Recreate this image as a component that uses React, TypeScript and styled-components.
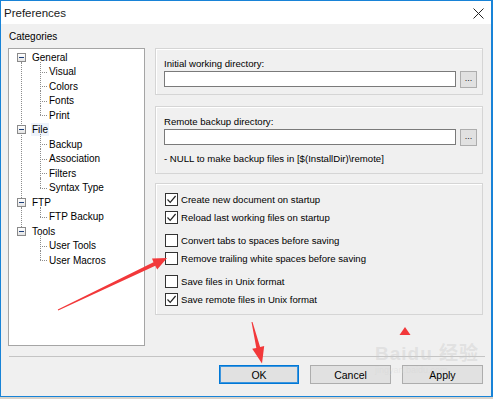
import React from 'react'
import styled, { createGlobalStyle } from 'styled-components'

const GlobalStyle = createGlobalStyle`
  html, body {
    margin: 0;
    padding: 0;
    background: #d8d3cb;
  }
  body {
    font-family: "Liberation Sans", Arial, sans-serif;
    font-size: 9.6px;
    color: #000;
  }
`

type TreeGroup = { label: string; children: string[] }

const tree: TreeGroup[] = [
  { label: 'General', children: ['Visual', 'Colors', 'Fonts', 'Print'] },
  { label: 'File', children: ['Backup', 'Association', 'Filters', 'Syntax Type'] },
  { label: 'FTP', children: ['FTP Backup'] },
  { label: 'Tools', children: ['User Tools', 'User Macros'] },
]

const options = [
  [
    { label: 'Create new document on startup', checked: true },
    { label: 'Reload last working files on startup', checked: true },
  ],
  [
    { label: 'Convert tabs to spaces before saving', checked: false },
    { label: 'Remove trailing white spaces before saving', checked: false },
  ],
  [
    { label: 'Save files in Unix format', checked: false },
    { label: 'Save remote files in Unix format', checked: true },
  ],
]

export default function App() {
  return (
    <>
      <GlobalStyle />
      <Window>
        <TitleBar>
          <Title>Preferences</Title>
          <CloseButton>
            <svg width="11" height="11" viewBox="0 0 11 11">
              <path d="M0.5 0.5 L10.5 10.5 M10.5 0.5 L0.5 10.5" stroke="#222" strokeWidth="1" />
            </svg>
          </CloseButton>
        </TitleBar>

        <Body>
          <Columns>
            <LeftColumn>
              <SectionLabel>Categories</SectionLabel>
              <TreeBox>
                {tree.map((group, gi) => (
                  <RootNode key={group.label} $last={gi === tree.length - 1}>
                    <RootRow>
                      <Expander />
                      <NodeLabel $selected={group.label === 'File'}>{group.label}</NodeLabel>
                    </RootRow>
                    <ChildList>
                      {group.children.map((child, ci) => (
                        <ChildRow key={child} $last={ci === group.children.length - 1}>
                          <NodeLabel>{child}</NodeLabel>
                        </ChildRow>
                      ))}
                    </ChildList>
                  </RootNode>
                ))}
              </TreeBox>
            </LeftColumn>

            <RightColumn>
              <GroupBox $height={47}>
                <FieldLabel>Initial working directory:</FieldLabel>
                <InputRow>
                  <TextInput />
                  <BrowseButton>...</BrowseButton>
                </InputRow>
              </GroupBox>

              <GroupBox $height={68}>
                <FieldLabel>Remote backup directory:</FieldLabel>
                <InputRow>
                  <TextInput />
                  <BrowseButton>...</BrowseButton>
                </InputRow>
                <Note>- NULL to make backup files in [$(InstallDir)\remote]</Note>
              </GroupBox>

              <CheckGroupBox>
                {options.map((set, si) => (
                  <CheckSet key={si}>
                    {set.map((opt) => (
                      <CheckRow key={opt.label}>
                        <CheckBox>
                          {opt.checked && (
                            <svg width="11" height="11" viewBox="0 0 11 11">
                              <path d="M1.5 5.5 L4.2 8.3 L9.6 2" fill="none" stroke="#222" strokeWidth="1.2" />
                            </svg>
                          )}
                        </CheckBox>
                        <span>{opt.label}</span>
                      </CheckRow>
                    ))}
                  </CheckSet>
                ))}
              </CheckGroupBox>
            </RightColumn>
          </Columns>

          <Separator />

          <ButtonRow>
            <DialogButton $default>OK</DialogButton>
            <DialogButton>Cancel</DialogButton>
            <DialogButton>Apply</DialogButton>
          </ButtonRow>
        </Body>

        <Watermark>
          <WatermarkLogo>Bai<span>du</span> 经验</WatermarkLogo>
          <WatermarkUrl>jingyan.baidu.com</WatermarkUrl>
        </Watermark>

        <Annotations width="493" height="399" viewBox="0 0 493 399">
          <polygon
            points="57.8,309.5 153.5,262.2 152,258.6 167,258 157.2,269.4 155.3,265.8 58.2,310.5"
            fill="#f2383a"
          />
          <polygon
            points="251.5,322.1 256.3,347.9 252.2,348.8 262,363.5 264.2,346 260.1,346.9 252.5,321.9"
            fill="#f2383a"
          />
          <polygon points="405,327 410.5,335 399.5,335" fill="#f2383a" />
        </Annotations>
      </Window>
    </>
  )
}

const Window = styled.div`
  position: relative;
  width: 493px;
  height: 397px;
  box-sizing: border-box;
  border: 1px solid #1883d7;
  border-right-width: 2px;
  background: #f0f0f0;
  display: flex;
  flex-direction: column;
  overflow: hidden;
`

const TitleBar = styled.div`
  height: 23px;
  background: #fff;
  display: flex;
  align-items: center;
  justify-content: space-between;
  padding: 0 7px 0 3px;
`

const Title = styled.div`
  font-size: 11.5px;
  color: #1a1a1a;
`

const CloseButton = styled.div`
  display: flex;
  align-items: center;
  margin-top: 1px;
`

const Body = styled.div`
  flex: 1;
  display: flex;
  flex-direction: column;
  padding: 6px 8px 0 7px;
`

const Columns = styled.div`
  display: grid;
  grid-template-columns: 137px 328px;
  column-gap: 10px;
`

const LeftColumn = styled.div`
  display: flex;
  flex-direction: column;
`

const SectionLabel = styled.div`
  height: 13px;
  line-height: 13px;
  margin: 0 0 5px 1px;
  font-size: 10px;
`

const TreeBox = styled.div`
  height: 298px;
  box-sizing: border-box;
  border: 1px solid #a5a5a5;
  background: #fff;
  padding-top: 1px;
`

const RootNode = styled.div<{ $last?: boolean }>`
  position: relative;

  &::before {
    content: '';
    position: absolute;
    left: 12px;
    top: 12px;
    bottom: ${({ $last }) => ($last ? 'auto' : '-3px')};
    height: ${({ $last }) => ($last ? '0' : 'auto')};
    border-left: 1px dotted #8c8c8c;
  }
`

const RootRow = styled.div`
  height: 14.5px;
  display: flex;
  align-items: center;
  padding-left: 8px;
`

const Expander = styled.div`
  position: relative;
  width: 9px;
  height: 9px;
  box-sizing: border-box;
  border: 1px solid #8a8a8a;
  background: linear-gradient(#fff, #e4e4e4);
  margin-right: 5px;
  flex: none;

  &::after {
    content: '';
    position: absolute;
    left: 1px;
    right: 1px;
    top: 3px;
    height: 1px;
    background: #1d3f7a;
  }
`

const NodeLabel = styled.span<{ $selected?: boolean }>`
  padding: 0 1px;
  line-height: 13px;
  font-size: 10px;
  background: ${({ $selected }) => ($selected ? '#eef3fb' : 'transparent')};
`

const ChildList = styled.div`
  padding-left: 31px;
`

const ChildRow = styled.div<{ $last?: boolean }>`
  position: relative;
  height: 14.5px;
  display: flex;
  align-items: center;
  padding-left: 8px;

  &::before {
    content: '';
    position: absolute;
    left: 0;
    top: 50%;
    width: 7px;
    border-top: 1px dotted #8c8c8c;
  }

  &::after {
    content: '';
    position: absolute;
    left: 0;
    top: -3px;
    height: ${({ $last }) => ($last ? '10px' : '15px')};
    border-left: 1px dotted #8c8c8c;
  }
`

const RightColumn = styled.div`
  padding-top: 18px;
  display: flex;
  flex-direction: column;
`

const GroupBox = styled.div<{ $height: number }>`
  height: ${({ $height }) => $height}px;
  box-sizing: border-box;
  border: 1px solid #d5d5d5;
  box-shadow: inset 1px 1px 0 #fff;
  padding: 8px 4px 0 8px;
  margin-bottom: 11px;
  display: flex;
  flex-direction: column;
`

const FieldLabel = styled.div`
  line-height: 13px;
  margin-bottom: 1px;
`

const InputRow = styled.div`
  display: flex;
  align-items: flex-start;
  gap: 4px;
`

const TextInput = styled.div`
  width: 292px;
  height: 16px;
  box-sizing: border-box;
  border: 1px solid #7a7a7a;
  background: #fff;
`

const BrowseButton = styled.div`
  width: 17px;
  height: 17px;
  box-sizing: border-box;
  border: 1px solid #adadad;
  background: #e1e1e1;
  font-size: 9px;
  line-height: 13px;
  text-align: center;
  color: #222;
`

const Note = styled.div`
  line-height: 13px;
  margin-top: 6px;
`

const CheckGroupBox = styled.div`
  height: 132px;
  box-sizing: border-box;
  border: 1px solid #d5d5d5;
  box-shadow: inset 1px 1px 0 #fff;
  padding: 6px 0 0 9px;
  margin-top: -2px;
  display: flex;
  flex-direction: column;
  gap: 5px;
`

const CheckSet = styled.div`
  display: flex;
  flex-direction: column;
`

const CheckRow = styled.div`
  height: 18px;
  display: flex;
  align-items: center;
  gap: 3px;
`

const CheckBox = styled.div`
  width: 13px;
  height: 13px;
  box-sizing: border-box;
  border: 1px solid #333;
  background: #fff;
  display: flex;
  align-items: center;
  justify-content: center;
  flex: none;
`

const Separator = styled.div`
  height: 1px;
  background: #c4c4c4;
  margin: 10px 0 0 1px;
  width: 476px;
`

const ButtonRow = styled.div`
  display: flex;
  justify-content: flex-end;
  gap: 11px;
  margin-top: 8px;
`

const DialogButton = styled.div<{ $default?: boolean }>`
  width: ${({ $default }) => ($default ? 80 : 81)}px;
  height: 19px;
  box-sizing: border-box;
  border: 1px solid ${({ $default }) => ($default ? '#0078d7' : '#adadad')};
  box-shadow: ${({ $default }) => ($default ? 'inset 0 0 0 1px #3d95dd' : 'none')};
  background: #e1e1e1;
  display: flex;
  align-items: center;
  justify-content: center;
  font-size: 10.5px;
`

const Watermark = styled.div`
  position: absolute;
  left: 374px;
  top: 342px;
  display: flex;
  flex-direction: column;
  align-items: flex-start;
  pointer-events: none;
  color: rgba(200, 200, 200, 0.4);
`

const WatermarkLogo = styled.div`
  font-size: 19px;
  line-height: 22px;
  font-weight: bold;
  font-family: "Liberation Sans", "Noto Sans CJK SC", sans-serif;
  letter-spacing: 1px;
`

const WatermarkUrl = styled.div`
  font-size: 9px;
  line-height: 10px;
  color: rgba(210, 210, 210, 0.35);
`

const Annotations = styled.svg`
  position: absolute;
  left: -1px;
  top: -1px;
  pointer-events: none;
`
